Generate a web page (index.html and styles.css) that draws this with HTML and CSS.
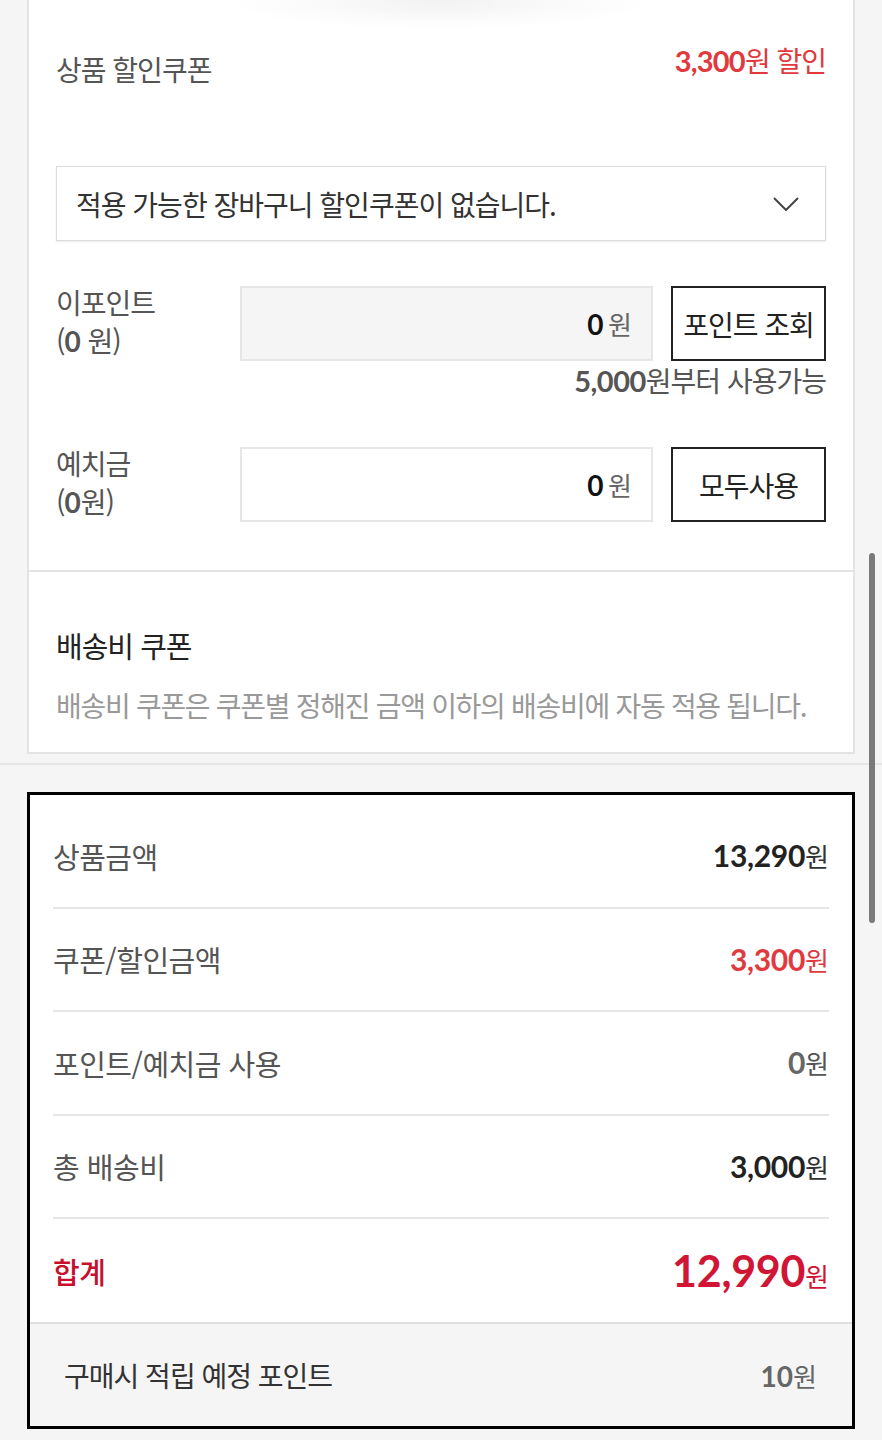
FILE: index.html
```html
<!DOCTYPE html>
<html lang="ko">
<head>
<meta charset="utf-8">
<title>주문 할인</title>
<link rel="stylesheet" href="styles.css">
</head>
<body>
<div class="page">
  <div class="card">
    <div class="section sec-discount">
      <div class="coupon-head">
        <span class="label coupon-label">상품 할인쿠폰</span>
        <span class="discount-amt"><span class="num">3,300</span>원 할인</span>
      </div>
      <div class="select">
        <span class="select-text">적용 가능한 장바구니 할인쿠폰이 없습니다.</span>
        <svg class="chevron" width="26" height="14" viewBox="0 0 26 14"><path d="M1 1 L13 13 L25 1" fill="none" stroke="#444" stroke-width="2"/></svg>
      </div>
      <div class="field-row row-point">
        <div class="label field-label">이포인트<br>(<span class="num">0</span> 원)</div>
        <div class="input input-disabled"><span class="num val">0</span>&nbsp;<span class="won">원</span></div>
        <button class="btn">포인트 조회</button>
      </div>
      <div class="hint"><span class="num">5,000</span>원부터 사용가능</div>
      <div class="field-row row-deposit">
        <div class="label field-label">예치금<br>(<span class="num">0</span>원)</div>
        <div class="input"><span class="num val">0</span>&nbsp;<span class="won">원</span></div>
        <button class="btn">모두사용</button>
      </div>
    </div>
    <div class="section sec-ship">
      <div class="ship-title">배송비 쿠폰</div>
      <div class="ship-desc">배송비 쿠폰은 쿠폰별 정해진 금액 이하의 배송비에 자동 적용 됩니다.</div>
    </div>
  </div>
  <div class="page-line"></div>
  <div class="summary">
    <div class="sum-rows">
      <div class="sum-row">
        <span class="sum-label">상품금액</span>
        <span class="sum-val dark"><span class="num">13,290</span><span class="won">원</span></span>
      </div>
      <div class="sum-row">
        <span class="sum-label">쿠폰/할인금액</span>
        <span class="sum-val red"><span class="num">3,300</span><span class="won">원</span></span>
      </div>
      <div class="sum-row">
        <span class="sum-label">포인트/예치금 사용</span>
        <span class="sum-val gray"><span class="num">0</span><span class="won">원</span></span>
      </div>
      <div class="sum-row">
        <span class="sum-label">총 배송비</span>
        <span class="sum-val dark"><span class="num">3,000</span><span class="won">원</span></span>
      </div>
      <div class="sum-row total">
        <span class="sum-label total-label">합계</span>
        <span class="sum-val crimson"><span class="num big">12,990</span><span class="won">원</span></span>
      </div>
    </div>
    <div class="sum-foot">
      <span class="foot-label">구매시 적립 예정 포인트</span>
      <span class="foot-val"><span class="num">10</span><span class="won">원</span></span>
    </div>
  </div>
  <div class="scrollbar"></div>
</div>
</body>
</html>
```

FILE: styles.css
```css
* { box-sizing: border-box; }
html, body {
  margin: 0;
  padding: 0;
  background: #f5f5f5;
}
body {
  font-family: "Noto Sans CJK KR", "Noto Sans", sans-serif;
  color: #333;
  -webkit-font-smoothing: antialiased;
}
.page {
  position: relative;
  width: 882px;
  min-height: 1440px;
  overflow: hidden;
}
.num {
  font-family: "Lato", "Noto Sans CJK KR", sans-serif;
  font-weight: 700;
}
.card {
  position: relative;
  margin: 0 27px;
  background: #fff;
  border-left: 2px solid #e3e3e3;
  border-right: 2px solid #e3e3e3;
  border-bottom: 2px solid #e3e3e3;
}
.card::before {
  content: "";
  position: absolute;
  top: -26px;
  left: 190px;
  width: 440px;
  height: 56px;
  background: radial-gradient(ellipse at center, rgba(0,0,0,0.05) 0%, rgba(0,0,0,0.015) 45%, rgba(0,0,0,0) 70%);
}
.section {
  padding: 0 27px;
}
.sec-discount {
  padding-top: 41px;
  padding-bottom: 48px;
  border-bottom: 2px solid #e3e3e3;
}
.label {
  font-size: 28px;
  color: #555;
  letter-spacing: -1px;
}
.coupon-head {
  display: flex;
  justify-content: space-between;
  align-items: flex-start;
  line-height: 39px;
}
.coupon-label {
  padding-top: 9px;
}
.discount-amt {
  font-size: 28px;
  color: #e0393e;
  letter-spacing: -1px;
}
.discount-amt .num {
  font-size: 29px;
  letter-spacing: -0.8px;
}
.select {
  margin-top: 77px;
  height: 75px;
  border: 1px solid #dcdcdc;
  box-shadow: 0 1px 2px rgba(0,0,0,0.08);
  display: flex;
  align-items: center;
  justify-content: space-between;
  padding: 0 26px 0 19px;
}
.select-text {
  font-size: 28px;
  color: #333;
  letter-spacing: -1px;
}
.chevron { display: block; }
.field-row {
  display: flex;
  height: 75px;
}
.row-point { margin-top: 45px; }
.row-deposit { margin-top: 47px; }
.field-label {
  flex: 0 0 184px;
  line-height: 38px;
  margin-top: -3px;
}
.field-label .num {
  font-weight: 700;
  font-size: 28px;
  letter-spacing: 0;
}
.input {
  flex: 1 1 auto;
  border: 2px solid #e6e6e6;
  background: #fff;
  display: flex;
  align-items: center;
  justify-content: flex-end;
  padding-right: 19px;
}
.input-disabled {
  background: #f5f5f5;
}
.input .val {
  font-size: 28px;
  color: #111;
}
.won {
  font-size: 26px;
  color: #666;
  font-weight: 400;
}
.btn {
  flex: 0 0 155px;
  margin: 0 0 0 18px;
  font-family: "Noto Sans CJK KR", sans-serif;
  font-size: 28px;
  letter-spacing: -1px;
  color: #222;
  background: #fff;
  border: 2px solid #222;
  padding: 0;
}
.hint {
  text-align: right;
  font-size: 28px;
  line-height: 38px;
  color: #555;
  letter-spacing: -1px;
}
.hint .num {
  font-size: 29px;
  letter-spacing: -0.5px;
}
.sec-ship {
  padding-top: 53px;
  padding-bottom: 27px;
}
.ship-title {
  font-size: 29px;
  line-height: 40px;
  color: #222;
  letter-spacing: -1px;
}
.ship-desc {
  margin-top: 20px;
  font-size: 28px;
  line-height: 40px;
  color: #999;
  letter-spacing: -1.3px;
  white-space: nowrap;
}
.page-line {
  margin-top: 9px;
  height: 2px;
  background: #e6e6e6;
}
.summary {
  margin: 27px 27px 0;
  border: 3px solid #000;
  background: #fff;
}
.sum-rows {
  padding: 10px 23px 0;
}
.sum-row {
  display: flex;
  justify-content: space-between;
  align-items: center;
  height: 103.5px;
  border-bottom: 2px solid #e6e6e6;
}
.sum-row.total {
  height: 103px;
  border-bottom: none;
}
.sum-label {
  font-size: 29px;
  color: #555;
  letter-spacing: -0.5px;
}
.total-label {
  color: #c8102e;
  font-weight: 500;
}
.sum-val .num {
  font-size: 30px;
  letter-spacing: -0.3px;
}
.sum-val .won {
  font-size: 26px;
}
.dark .num { color: #222; }
.dark .won { color: #333; }
.red .num, .red .won { color: #e0393e; }
.gray .num { color: #666; }
.gray .won { color: #555; }
.crimson .num, .crimson .won { color: #d01535; }
.crimson .num.big {
  font-size: 43px;
  letter-spacing: -0.3px;
}
.sum-foot {
  border-top: 2px solid #e0e0e0;
  background: #f5f5f5;
  height: 104px;
  display: flex;
  justify-content: space-between;
  align-items: center;
  padding: 0 35px 0 34px;
}
.foot-label {
  font-size: 28px;
  color: #333;
  letter-spacing: -1px;
}
.foot-val .num {
  font-size: 28px;
  color: #666;
  letter-spacing: 0;
}
.foot-val .won {
  font-size: 26px;
  color: #666;
}
.scrollbar {
  position: absolute;
  left: 869px;
  top: 553px;
  width: 6px;
  height: 370px;
  border-radius: 3px;
  background: #7a7a7a;
}
```
